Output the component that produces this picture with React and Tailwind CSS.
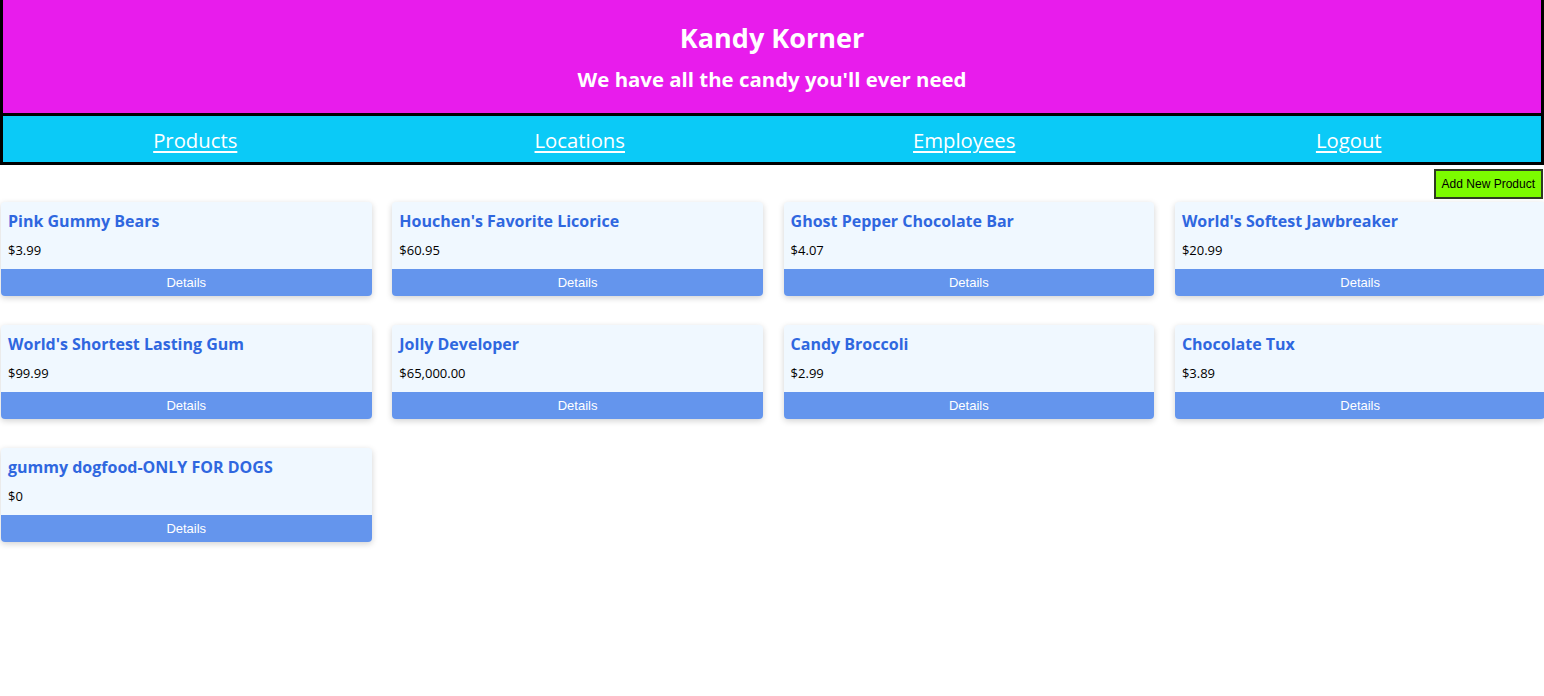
import React from "react";

const products = [
  { id: 1, name: "Pink Gummy Bears", price: "$3.99" },
  { id: 2, name: "Houchen's Favorite Licorice", price: "$60.95" },
  { id: 3, name: "Ghost Pepper Chocolate Bar", price: "$4.07" },
  { id: 4, name: "World's Softest Jawbreaker", price: "$20.99" },
  { id: 5, name: "World's Shortest Lasting Gum", price: "$99.99" },
  { id: 6, name: "Jolly Developer", price: "$65,000.00" },
  { id: 7, name: "Candy Broccoli", price: "$2.99" },
  { id: 8, name: "Chocolate Tux", price: "$3.89" },
  { id: 9, name: "gummy dogfood-ONLY FOR DOGS", price: "$0" },
];

const navLinks = ["Products", "Locations", "Employees", "Logout"];

const ProductCard = ({ product }) => (
  <div className="h-[94px] flex flex-col bg-[#f0f8ff] rounded-[4px] shadow-[0_2px_6px_rgba(0,0,0,0.18)] overflow-hidden">
    <div className="px-[7px] pt-[8px] text-[16px] leading-[22px] font-bold text-[#2f67df]">
      {product.name}
    </div>
    <div className="px-[7px] pt-[9px] text-[13px] leading-[18px] text-black">
      {product.price}
    </div>
    <button className="mt-auto h-[27px] w-full bg-[#6495ed] text-white text-[13px] font-['Liberation_Sans',Arial,sans-serif]">
      Details
    </button>
  </div>
);

export default function App() {
  return (
    <div className="min-h-screen bg-white font-['Open_Sans',sans-serif]">
      {/* HEADER */}
      <header className="h-[116px] bg-[#e81cec] border-x-[3px] border-b-[3px] border-black flex flex-col items-center text-white font-bold">
        <h1 className="mt-[19px] text-[27px] leading-[38px]">Kandy Korner</h1>
        <h2 className="mt-[7px] text-[20.4px] leading-[30px]">
          We have all the candy you'll ever need
        </h2>
      </header>

      {/* NAV */}
      <nav className="h-[49px] bg-[#0bcaf7] border-x-[3px] border-b-[3px] border-black flex items-center pt-[2px]">
        {navLinks.map((l) => (
          <div key={l} className="flex-1 text-center">
            <a href="#" className="text-white text-[20.3px] underline underline-offset-[3px]">
              {l}
            </a>
          </div>
        ))}
      </nav>

      {/* ADD BUTTON */}
      <div className="flex justify-end pt-[4px] pr-px">
        <button className="h-[30px] px-[6px] bg-[#7cfc00] border-2 border-[#2e3b22] text-[12px] text-black font-['Liberation_Sans',Arial,sans-serif]">
          Add New Product
        </button>
      </div>

      {/* PRODUCTS */}
      <div className="grid grid-cols-[repeat(4,370.5px)] gap-x-[20.8px] gap-y-[29px] pl-px pt-[3px]">
        {products.map((p) => (
          <ProductCard key={p.id} product={p} />
        ))}
      </div>
    </div>
  );
}
